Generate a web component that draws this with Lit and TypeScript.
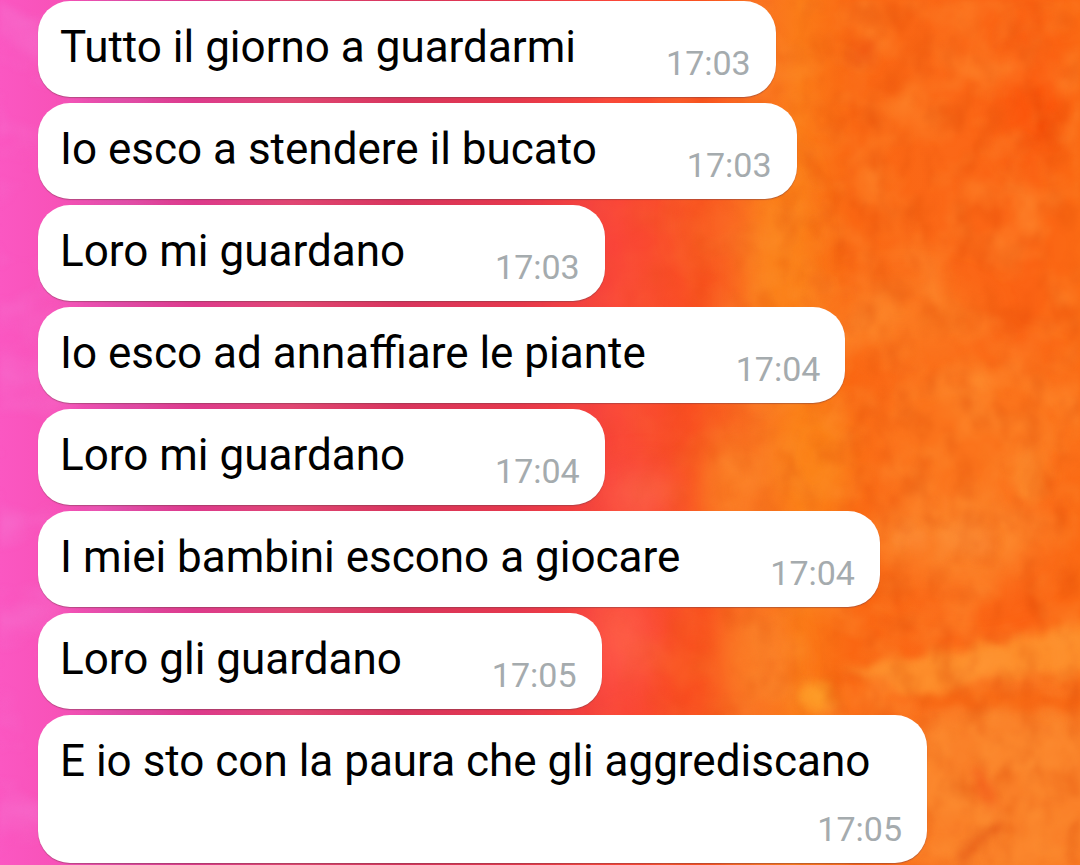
import { LitElement, html, css } from "lit";
import { customElement, property } from "lit/decorators.js";

interface Message {
  text: string;
  time: string;
}

const MESSAGES: Message[] = [
  { text: "Tutto il giorno a guardarmi", time: "17:03" },
  { text: "Io esco a stendere il bucato", time: "17:03" },
  { text: "Loro mi guardano", time: "17:03" },
  { text: "Io esco ad annaffiare le piante", time: "17:04" },
  { text: "Loro mi guardano", time: "17:04" },
  { text: "I miei bambini escono a giocare", time: "17:04" },
  { text: "Loro gli guardano", time: "17:05" },
  { text: "E io sto con la paura che gli aggrediscano", time: "17:05" },
];

/* Painted wallpaper: pink to orange wash with brush texture. */
@customElement("chat-wallpaper")
export class ChatWallpaper extends LitElement {
  static styles = css`
    :host {
      display: block;
      min-height: 0;
      contain: size;
    }
    .art {
      display: block;
      width: 100%;
      height: 100%;
    }
  `;

  render() {
    return html`
      <svg
        class="art"
        viewBox="0 0 1080 865"
        preserveAspectRatio="none"
        color-interpolation-filters="sRGB"
        aria-hidden="true"
      >
        <defs>
          <linearGradient id="wash" x1="0" x2="1" y1="0" y2="0">
            <stop offset="0" stop-color="#fb57c2" />
            <stop offset="0.05" stop-color="#f852b9" />
            <stop offset="0.11" stop-color="#df4ba6" />
            <stop offset="0.18" stop-color="#dd3a8c" />
            <stop offset="0.27" stop-color="#e04672" />
            <stop offset="0.37" stop-color="#d8355e" />
            <stop offset="0.48" stop-color="#e5384c" />
            <stop offset="0.57" stop-color="#fa4539" />
            <stop offset="0.65" stop-color="#f9511f" />
            <stop offset="0.7" stop-color="#fa7222" />
            <stop offset="0.74" stop-color="#fb7c18" />
            <stop offset="0.79" stop-color="#fa6713" />
            <stop offset="0.88" stop-color="#fb6817" />
            <stop offset="0.95" stop-color="#fb6314" />
            <stop offset="1" stop-color="#fb6a14" />
          </linearGradient>
          <filter id="soft" x="-60%" y="-60%" width="220%" height="220%">
            <feGaussianBlur stdDeviation="18" />
          </filter>
          <filter id="edge" x="-20%" y="-30%" width="140%" height="160%">
            <feGaussianBlur in="SourceGraphic" stdDeviation="5" result="b" />
            <feTurbulence type="fractalNoise" baseFrequency="0.04" numOctaves="2" seed="4" />
            <feDisplacementMap in="b" scale="16" xChannelSelector="R" yChannelSelector="G" />
            <feGaussianBlur stdDeviation="2" />
          </filter>
          <filter id="dark" x="0" y="0" width="100%" height="100%">
            <feTurbulence type="fractalNoise" baseFrequency="0.045 0.03" numOctaves="4" seed="8" />
            <feColorMatrix values="0 0 0 0 0.86  0 0 0 0 0.28  0 0 0 0 0.02  1.6 1.2 0 0 -1.3" />
            <feGaussianBlur stdDeviation="2" />
          </filter>
          <filter id="light" x="0" y="0" width="100%" height="100%">
            <feTurbulence type="fractalNoise" baseFrequency="0.02 0.022" numOctaves="4" seed="21" />
            <feColorMatrix values="0 0 0 0 1  0 0 0 0 0.62  0 0 0 0 0.24  1.6 1 0 0 -1.1" />
            <feGaussianBlur stdDeviation="2" />
          </filter>
          <filter id="pink" x="0" y="0" width="100%" height="100%">
            <feTurbulence type="fractalNoise" baseFrequency="0.012 0.02" numOctaves="3" seed="12" />
            <feColorMatrix values="0 0 0 0 0.96  0 0 0 0 0.46  0 0 0 0 0.82  2.4 0 0 0 -1.05" />
            <feGaussianBlur stdDeviation="2" />
          </filter>
          <linearGradient id="fade-right">
            <stop offset="0.5" stop-color="#000" />
            <stop offset="0.65" stop-color="#888" />
            <stop offset="0.8" stop-color="#fff" />
          </linearGradient>
          <linearGradient id="fade-left">
            <stop offset="0.02" stop-color="#fff" />
            <stop offset="0.16" stop-color="#000" />
          </linearGradient>
          <mask id="right" maskUnits="userSpaceOnUse" x="0" y="0" width="1080" height="865">
            <rect width="1080" height="865" fill="url(#fade-right)" />
          </mask>
          <mask id="left" maskUnits="userSpaceOnUse" x="0" y="0" width="1080" height="865">
            <rect width="1080" height="865" fill="url(#fade-left)" />
          </mask>
        </defs>
        <rect width="1080" height="865" fill="url(#wash)" />
        <g filter="url(#soft)">
          <ellipse cx="640" cy="495" rx="32" ry="20" fill="#fb6350" />
          <ellipse cx="620" cy="640" rx="32" ry="50" fill="#fd5648" />
          <ellipse cx="720" cy="225" rx="26" ry="22" fill="#fa6a26" />
          <ellipse cx="735" cy="490" rx="34" ry="60" fill="#fa7a22" />
          <ellipse cx="775" cy="270" rx="22" ry="110" fill="#fb8419" />
          <ellipse cx="815" cy="460" rx="34" ry="60" fill="#fb8318" />
          <ellipse cx="750" cy="660" rx="30" ry="50" fill="#fa7d26" />
          <ellipse cx="900" cy="320" rx="80" ry="30" fill="#fb7c22" />
          <ellipse cx="980" cy="430" rx="110" ry="70" fill="#fb741c" />
          <ellipse cx="960" cy="540" rx="90" ry="45" fill="#fb7e26" />
          <ellipse cx="1010" cy="790" rx="120" ry="110" fill="#fa8129" />
          <ellipse cx="1035" cy="95" rx="26" ry="60" fill="#fb520a" />
          <ellipse cx="690" cy="665" rx="20" ry="40" fill="#f94b1c" />
        </g>
        <g filter="url(#edge)">
          <path d="M840 666 L930 655 L1120 616 V672 L1000 678 L920 696 Z" fill="#fd8e2b" />
          <ellipse cx="817" cy="696" rx="20" ry="13" fill="#fd9b27" />
          <ellipse cx="910" cy="537" rx="20" ry="14" fill="#fb8630" />
          <ellipse cx="967" cy="540" rx="26" ry="18" fill="#fb8630" />
          <ellipse cx="1030" cy="475" rx="18" ry="26" fill="#fb8226" />
          <path d="M920 696 L975 690 L1100 696 V708 H920 Z" fill="#f76814" />
          <path d="M960 866 L978 838 L1004 826" fill="none" stroke="#e25414" stroke-width="7" />
          <path d="M1038 100 L1046 140" fill="none" stroke="#ec4000" stroke-width="7" />
          <path d="M978 770 L990 806" fill="none" stroke="#f4641e" stroke-width="14" />
          <ellipse cx="864" cy="54" rx="12" ry="14" fill="#ee4c0a" />
        </g>
        <g mask="url(#right)">
          <rect width="1080" height="865" filter="url(#light)" opacity="0.5" />
          <rect width="1080" height="865" filter="url(#dark)" opacity="0.4" />
        </g>
        <g mask="url(#left)">
          <rect width="1080" height="865" filter="url(#pink)" opacity="0.6" />
        </g>
      </svg>
    `;
  }
}

@customElement("chat-bubble")
export class ChatBubble extends LitElement {
  @property() text = "";
  @property() time = "";

  static styles = css`
    :host {
      display: flex;
      flex-wrap: wrap;
      align-items: flex-end;
      justify-content: flex-end;
      column-gap: 90px;
      row-gap: 12px;
      box-sizing: border-box;
      max-width: 100%;
      padding: 20px 25px 14px 22px;
      border-radius: 32px;
      background: #fff;
      box-shadow: 0 1px 1px rgba(110, 60, 70, 0.45);
    }
    .text {
      margin: 0 auto 10px 0;
      font-size: 44px;
      line-height: 52px;
      color: #000;
    }
    .time {
      font-size: 34px;
      line-height: 40px;
      color: #a5abae;
    }
  `;

  render() {
    return html`
      <p class="text">${this.text}</p>
      <time class="time">${this.time}</time>
    `;
  }
}

@customElement("app-root")
export class AppRoot extends LitElement {
  static styles = css`
    :host {
      display: grid;
      min-height: 100vh;
      overflow: hidden;
      font-family: Roboto, "Noto Sans", sans-serif;
    }
    .wallpaper,
    .messages {
      grid-area: 1 / 1;
    }
    .messages {
      z-index: 1;
      display: flex;
      flex-direction: column;
      align-items: flex-start;
      gap: 6px;
      margin: 0;
      padding: 1px 153px 2px 38px;
      list-style: none;
    }
    .item {
      display: flex;
      max-width: 100%;
    }
  `;

  render() {
    return html`
      <chat-wallpaper class="wallpaper"></chat-wallpaper>
      <ul class="messages">
        ${MESSAGES.map(
          (m) => html`<li class="item"><chat-bubble .text=${m.text} .time=${m.time}></chat-bubble></li>`
        )}
      </ul>
    `;
  }
}
